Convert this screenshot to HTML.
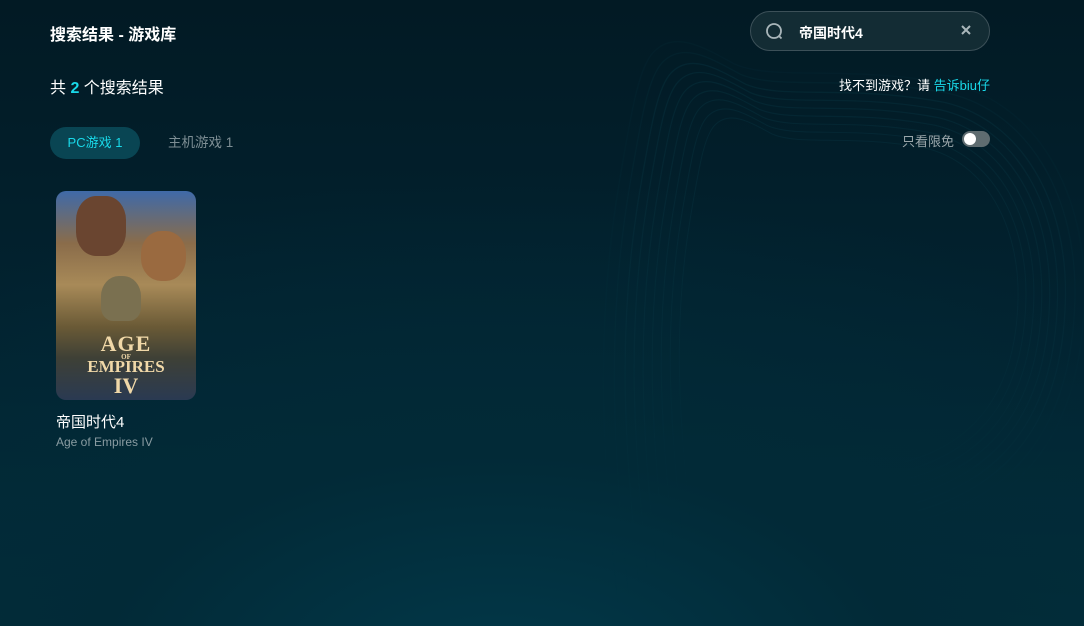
<!DOCTYPE html>
<html><head><meta charset="utf-8"><style>
*{margin:0;padding:0;box-sizing:border-box}
html,body{width:1084px;height:626px;overflow:hidden}
body{font-family:"Liberation Sans","Noto Sans CJK SC",sans-serif;color:#fff;
background:radial-gradient(ellipse 900px 500px at 500px 680px,#02394a 0%,#022a37 45%,rgba(2,28,38,0) 100%),linear-gradient(180deg,#021a24 0%,#022432 60%,#02303d 100%);position:relative}
.a{position:absolute}
.title{left:50px;top:21px;font-size:16px;font-weight:bold}
.count{left:50px;top:74px;font-size:16px}
.count b{color:#19d8e8}
.search{left:750px;top:11px;width:240px;height:40px;border:1px solid #3c5058;border-radius:20px;background:#132c34}
.search .t{position:absolute;left:48px;top:11px;font-size:14px;font-weight:bold}
.tell{right:94px;top:75px;font-size:13px}
.tell span{color:#19d8e8}
.tab1{left:50px;top:127px;width:90px;height:32px;border-radius:16px;background:#094553;color:#19d8e8;font-size:13px;text-align:center;line-height:32px}
.tab2{left:168px;top:127px;height:32px;line-height:32px;font-size:13.5px;color:#7d8e94}
.free{left:902px;top:131px;font-size:13px;color:#9aa6aa}
.tog{left:962px;top:131px;width:28px;height:16px;border-radius:8px;background:#5f6c70}
.tog:after{content:"";position:absolute;left:2px;top:2px;width:12px;height:12px;border-radius:6px;background:#fff}
.cover{left:56px;top:191px;width:140px;height:209px;border-radius:10px;overflow:hidden;
background:linear-gradient(180deg,#3f6aa8 0%,#8a6c4a 25%,#a88a58 45%,#6a5a36 65%,#3e4036 80%,#2a3a52 100%)}
.logo{position:absolute;left:0;width:140px;text-align:center;font-family:"Liberation Serif",serif;color:#f0d8a8;font-weight:bold}
.gname{left:56px;top:411px;font-size:15px}
.ename{left:56px;top:435px;font-size:12px;color:#8a9ca2}
</style></head><body>
<svg class="a" style="left:0;top:0" width="1084" height="626" viewBox="0 0 1084 626" fill="none" opacity=".35">
<defs><linearGradient id="f" x1="0" y1="0" x2="0" y2="1"><stop offset="0" stop-color="#0b3d4a" stop-opacity=".9"/><stop offset=".55" stop-color="#0b3d4a" stop-opacity=".6"/><stop offset="1" stop-color="#0b3d4a" stop-opacity="0"/></linearGradient></defs>
<g stroke="url(#f)" stroke-width="1">
<path id="p" d="M690,520 C680,420 672,330 690,220 C700,160 705,135 715,125 C730,110 750,122 772,134 C800,146 850,134 925,148 C985,162 1020,225 1018,300 C1016,380 985,440 905,462"/>
<use href="#p" transform="translate(860 300) scale(1.05) translate(-860 -300)"/>
<use href="#p" transform="translate(860 300) scale(1.1) translate(-860 -300)"/>
<use href="#p" transform="translate(860 300) scale(1.15) translate(-860 -300)"/>
<use href="#p" transform="translate(860 300) scale(1.2) translate(-860 -300)"/>
<use href="#p" transform="translate(860 300) scale(1.25) translate(-860 -300)"/>
<use href="#p" transform="translate(860 300) scale(1.3) translate(-860 -300)"/>
<use href="#p" transform="translate(860 300) scale(1.36) translate(-860 -300)" opacity=".6"/>
<use href="#p" transform="translate(860 300) scale(1.42) translate(-860 -300)" opacity=".4"/>
</g></svg>
<div class="a title">搜索结果 - 游戏库</div>
<div class="a count">共 <b>2</b> 个搜索结果</div>
<div class="a search">
<svg style="position:absolute;left:14px;top:10px" width="20" height="20" viewBox="0 0 20 20" fill="none" stroke="#a9b6ba" stroke-width="1.8"><circle cx="9" cy="9" r="7"/><path d="M14 14l2.5 2.5"/></svg>
<div class="t">帝国时代4</div>
<svg style="position:absolute;left:210px;top:13px" width="10" height="10" viewBox="0 0 10 10" stroke="#a9b6ba" stroke-width="2"><path d="M1 1l8 8M9 1L1 9"/></svg>
</div>
<div class="a tell">找不到游戏？请 <span>告诉biu仔</span></div>
<div class="a tab1">PC游戏 1</div>
<div class="a tab2">主机游戏 1</div>
<div class="a free">只看限免</div>
<div class="a tog"></div>
<div class="a cover">
<div style="position:absolute;left:20px;top:5px;width:50px;height:60px;border-radius:40%;background:#6a4530"></div>
<div style="position:absolute;left:85px;top:40px;width:45px;height:50px;border-radius:45%;background:#9a6a40"></div>
<div style="position:absolute;left:45px;top:85px;width:40px;height:45px;border-radius:45% 45% 30% 30%;background:#7a7050"></div>
<div class="logo" style="top:140px;font-size:22px;letter-spacing:1px">AGE</div>
<div class="logo" style="top:162px;font-size:7px">OF</div>
<div class="logo" style="top:166px;font-size:17px">EMPIRES</div>
<div class="logo" style="top:182px;font-size:22px">IV</div>
</div>
<div class="a gname">帝国时代4</div>
<div class="a ename">Age of Empires IV</div>
</body></html>
